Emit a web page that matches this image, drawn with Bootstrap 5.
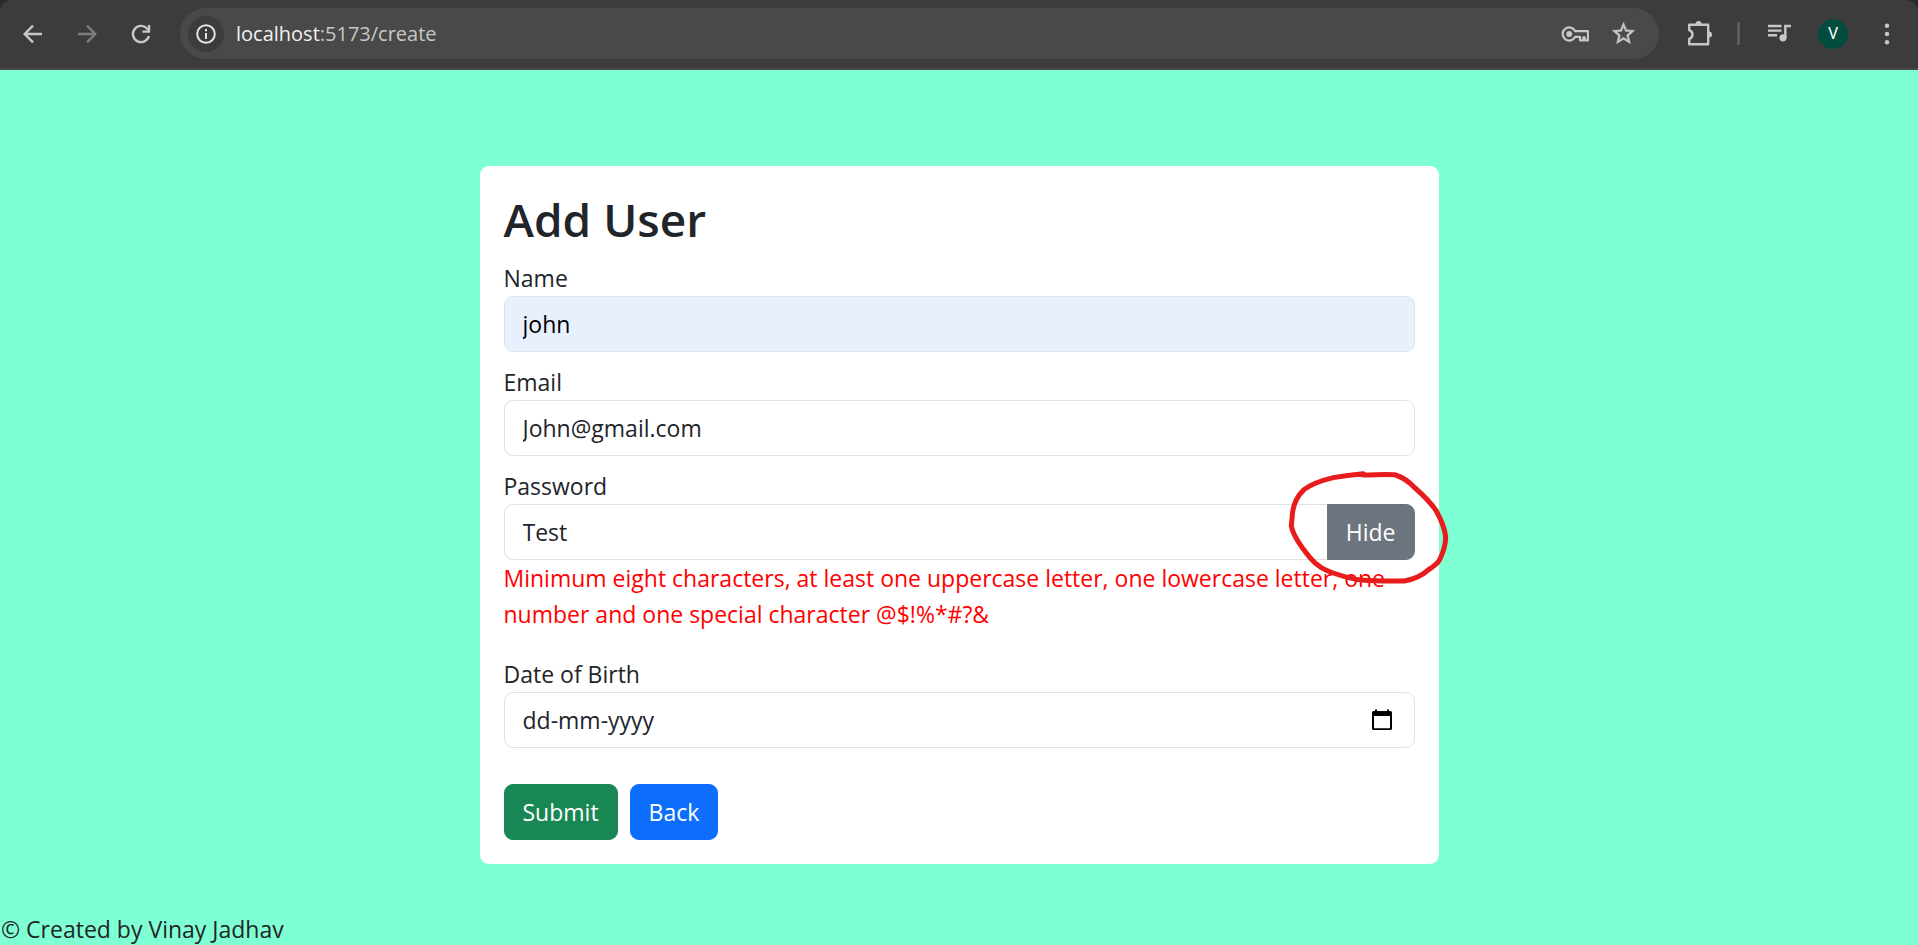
<!DOCTYPE html>
<html lang="en">
<head>
<meta charset="utf-8">
<meta name="viewport" content="width=device-width, initial-scale=1">
<title>Add User</title>
<link href="https://cdn.jsdelivr.net/npm/bootstrap@5.3.0/dist/css/bootstrap.min.css" rel="stylesheet">
<style>
  html { font-size: 24px; }
  body {
    font-family: "Open Sans", "Noto Sans", sans-serif;
    font-size: 23px;
    line-height: 36px;
    background: #7fffd4;
  }
  h2 { font-size: 46px; font-weight: 600; line-height: 58px; }
  .form-control, .btn { font-size: 23px; line-height: 36px; }
  .form-control::placeholder { color: #212529; opacity: 1; }
  .autofilled, .autofilled:focus { background: #e8f0fe; color: #000; }
  .error-text { color: #f00; }
  .submit-row { margin-top: 36px; }

  /* browser toolbar */
  .toolbar-frame { background: #2b2b2b; }
  .toolbar {
    background: #3c3c3c;
    border-bottom: 2px solid #474747;
    border-radius: 12px 12px 0 0;
    padding: 8px 4px 9px 6px;
  }
  .tool {
    width: 54px; height: 51px; padding: 0; border: 0; background: none; color: #c7c7c7;
    display: flex; align-items: center; justify-content: center; flex: none;
  }
  .tool:disabled { color: #7b7b7b; }
  .tool-slim { width: 48px; }
  .address { background: #494949; border-radius: 26px; margin: 0 13px 0 12px; padding: 0 12px 0 8px; }
  .site-info { width: 36px; height: 36px; background: #3c3c3c; border-radius: 50%; color: #e3e3e3; }
  .address-input { min-width: 0; font-size: 20px; line-height: 28px; color: #c7c7c7; margin-left: 12px; }
  .address-input b { font-weight: 400; color: #f1f1f1; }
  .divider { width: 3px; height: 23px; background: #5e5e5e; margin: 0 12px 0 11px; border-radius: 1px; }
  .avatar { width: 30px; height: 30px; border-radius: 50%; background: #004d40; color: #fff; font: 16px/30px Roboto, sans-serif; }

  .page-main { padding: 96px 0 44px; }
  .calendar-btn { right: 20px; top: 14px; width: 26px; height: 28px; z-index: 6; }
  .scribble { right: -64px; top: -64px; z-index: 9; pointer-events: none; }
  .page-footer { line-height: 32px; padding-left: 1px; }
</style>
</head>
<body class="d-flex flex-column min-vh-100">

<header class="toolbar-frame">
  <div class="toolbar d-flex align-items-center">
    <button class="tool" type="button" aria-label="Back to previous page">
      <svg width="24" height="24" viewBox="0 0 24 24" fill="none" stroke="currentColor" stroke-width="2.4"><path d="M21 12H4M12 3.6 3.7 12l8.3 8.4"/></svg>
    </button>
    <button class="tool" type="button" aria-label="Forward" disabled>
      <svg width="24" height="24" viewBox="0 0 24 24" fill="none" stroke="currentColor" stroke-width="2.4"><path d="M3 12h17M12 3.6l8.3 8.4-8.3 8.4"/></svg>
    </button>
    <button class="tool" type="button" aria-label="Reload">
      <svg width="24" height="24" viewBox="0 0 24 24" fill="none" stroke="currentColor" stroke-width="2.4"><path d="M19.9 14A8.1 8.1 0 1 1 18 6.5L20 8.7"/><path d="M20 3v6.6h-6.6"/></svg>
    </button>
    <div class="address d-flex align-items-center flex-grow-1">
      <button class="tool site-info" type="button" aria-label="Site information">
        <svg width="20" height="20" viewBox="0 0 20 20" fill="none" stroke="currentColor" stroke-width="2"><circle cx="10" cy="10" r="8.8"/><path d="M10 9v6M10 5v2.2"/></svg>
      </button>
      <div class="address-input flex-grow-1 text-truncate"><b>localhost</b>:5173/create</div>
      <button class="tool tool-slim" type="button" aria-label="Passwords">
        <svg width="28" height="18" viewBox="0 0 28 18" fill="none" stroke="currentColor" stroke-width="2.2"><path d="M14.2 6.2A6.6 6.6 0 1 0 14.2 11.8H19V15.3H22.4V12.4H23.8V15.3H27V6.2Z" stroke-linejoin="round"/><circle cx="8.2" cy="9" r="3" fill="currentColor" stroke="none"/></svg>
      </button>
      <button class="tool tool-slim" type="button" aria-label="Bookmark this page">
        <svg width="27" height="27" viewBox="0 0 24 24" fill="currentColor" stroke="currentColor" stroke-width=".4"><path d="m22 9.24-7.19-.62L12 2 9.19 8.63 2 9.24l5.46 4.73L5.82 21 12 17.27 18.18 21l-1.63-7.03L22 9.24zM12 15.4l-3.76 2.27 1-4.28-3.32-2.88 4.38-.38L12 6.1l1.71 4.04 4.38.38-3.32 2.88 1 4.28L12 15.4z"/></svg>
      </button>
    </div>
    <button class="tool" type="button" aria-label="Extensions">
      <svg width="26" height="30" viewBox="0 0 26 30" fill="none" stroke="currentColor" stroke-width="2.4" stroke-linejoin="round"><path d="M3.2 5.8h19v19.4h-19v-5.4c2-.6 3.3-2.1 3.3-4.3s-1.300-3.700-3.300-4.300z"/><path d="M9.600 5a3 3 0 0 1 6 0zM23 12.500a3 3 0 0 1 0 6z" fill="currentColor" stroke="none"/></svg>
    </button>
    <div class="divider flex-shrink-0"></div>
    <button class="tool" type="button" aria-label="Media controls">
      <svg width="24" height="24" viewBox="0 0 24 24" fill="none" stroke="currentColor" stroke-width="2.4"><path d="M1 4h13.500M1 8.600h13.500M1 13.200h9M18.300 15.500V4H24"/><circle cx="16" cy="15.800" r="3.600" fill="currentColor" stroke="none"/></svg>
    </button>
    <button class="tool" type="button" aria-label="Profile"><span class="avatar">V</span></button>
    <button class="tool" type="button" aria-label="Menu">
      <svg width="6" height="24" viewBox="0 0 6 24" fill="currentColor"><circle cx="3" cy="3.700" r="2.200"/><circle cx="3" cy="12" r="2.200"/><circle cx="3" cy="20.300" r="2.200"/></svg>
    </button>
  </div>
</header>

<main class="page-main d-flex justify-content-center">
  <div class="w-50 bg-white rounded p-3">
    <form>
      <h2 class="mb-2">Add User</h2>
      <div class="mb-2">
        <label class="d-block" for="name">Name</label>
        <input class="form-control autofilled" id="name" type="text" value="john">
      </div>
      <div class="mb-2">
        <label class="d-block" for="email">Email</label>
        <input class="form-control" id="email" type="email" value="John@gmail.com">
      </div>
      <div class="mb-3">
        <label class="d-block" for="password">Password</label>
        <div class="position-relative">
          <div class="input-group">
            <input class="form-control" id="password" type="text" value="Test" aria-describedby="password-error">
            <button class="btn btn-secondary" type="button">Hide</button>
          </div>
          <svg class="scribble position-absolute" width="240" height="170" viewBox="0 0 720 510" fill="none" stroke="#e81c1c" stroke-width="15" stroke-linejoin="round" stroke-linecap="round" aria-hidden="true"><path d="M373 101C340 104 310 108 283 113C250 121 215 133 195 149C175 168 162 196 160 225L157 258C163 290 190 325 213 353C235 380 255 388 283 399C320 412 340 418 368 420C400 423 440 424 496 423C525 417 548 408 566 391C585 378 598 370 604 355C613 335 620 310 620 290C617 265 607 240 592 213C572 183 550 163 528 144C510 125 495 113 470 105C450 102 410 105 373 105Z"/></svg>
        </div>
        <div class="error-text" id="password-error">Minimum eight characters, at least one uppercase letter, one lowercase letter, one number and one special character @$!%*#?&amp;</div>
      </div>
      <div>
        <label class="d-block" for="dob">Date of Birth</label>
        <div class="position-relative">
          <input class="form-control" id="dob" type="text" placeholder="dd-mm-yyyy">
          <button class="calendar-btn btn p-0 border-0 position-absolute d-flex align-items-center justify-content-center" type="button" aria-label="Open calendar">
            <svg width="20" height="22" viewBox="0 0 20 22"><path d="M3 .500h2V2h10V.500h2V2h1.500Q20 2 20 3.500v16q0 1.500-1.500 1.500h-17Q0 21 0 19.500v-16Q0 2 1.500 2H3zM2 7v12.300h16V7z" fill="#000" fill-rule="evenodd"/></svg>
          </button>
        </div>
      </div>
      <div class="d-flex gap-2 submit-row">
        <button class="btn btn-success" type="submit">Submit</button>
        <a class="btn btn-primary" href="#">Back</a>
      </div>
    </form>
  </div>
</main>

<footer class="page-footer mt-auto">© Created by Vinay Jadhav</footer>

<script src="https://cdn.jsdelivr.net/npm/bootstrap@5.3.0/dist/js/bootstrap.bundle.min.js"></script>
</body>
</html>
